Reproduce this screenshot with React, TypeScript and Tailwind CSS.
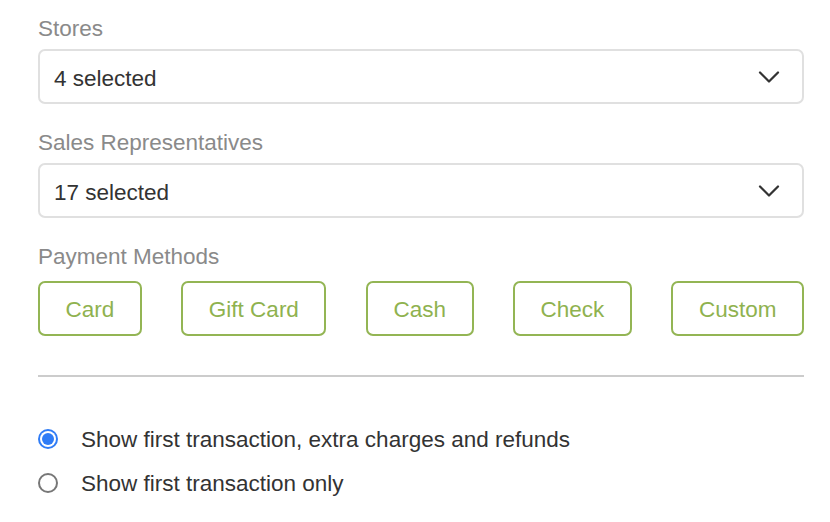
import { ChevronDown } from 'lucide-react';

const selects = [
  { label: 'Stores', value: '4 selected' },
  { label: 'Sales Representatives', value: '17 selected' },
];

const methods = ['Card', 'Gift Card', 'Cash', 'Check', 'Custom'];

export default function App() {
  return (
    <div
      className="w-[830px] h-[522px] bg-white pl-[38px] pr-[26px] pt-[16px] text-[22.5px] leading-[26px]"
      style={{ fontFamily: '"Liberation Sans", Arial, sans-serif' }}
    >
      {selects.map((s) => (
        <div key={s.label} className="mb-[26px]">
          <div className="text-[#8a8a8a] mb-[7px]">{s.label}</div>
          <div className="h-[55px] flex items-center justify-between pl-[14px] pr-[15px] border-2 border-[#e0e0e0] rounded-[7px] text-[#333]">
            <span className="pt-[4px]">{s.value}</span>
            <ChevronDown className="w-[36px] h-[36px] text-[#333]" strokeWidth={1.5} />
          </div>
        </div>
      ))}

      <div className="text-[#8a8a8a] mb-[11px]">Payment Methods</div>
      <div className="flex justify-between">
        {methods.map((m) => (
          <button
            key={m}
            className="h-[55px] px-[25.5px] pt-[2px] border-[2.5px] border-[#93b554] rounded-[7px] text-[#8fb24f]"
          >
            {m}
          </button>
        ))}
      </div>

      <div className="h-[2px] bg-[#cccccc] mt-[39px]" />

      <div className="mt-[48px] flex flex-col gap-[16px] text-[#333]">
        <label className="flex items-center gap-[23px]">
          <span className="w-[20px] h-[20px] rounded-full bg-[#2f7cf6] flex items-center justify-center">
            <span className="w-[16px] h-[16px] rounded-full bg-white flex items-center justify-center">
              <span className="w-[12px] h-[12px] rounded-full bg-[#2f7cf6]" />
            </span>
          </span>
          <span className="pt-[2px]">Show first transaction, extra charges and refunds</span>
        </label>
        <label className="flex items-center gap-[23px]">
          <span className="w-[20px] h-[20px] rounded-full border-2 border-[#777]" />
          <span className="pt-[2px]">Show first transaction only</span>
        </label>
      </div>
    </div>
  );
}
